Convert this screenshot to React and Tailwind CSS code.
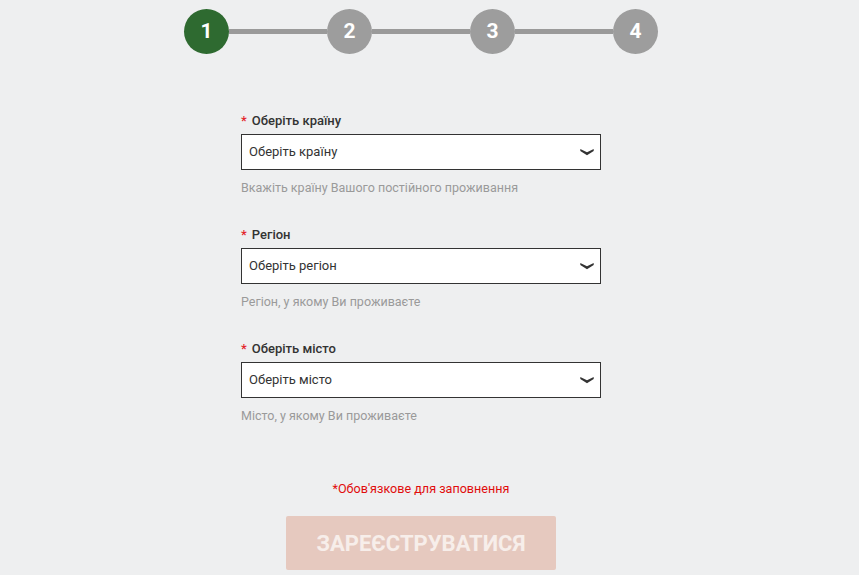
const steps = [1, 2, 3, 4];

const fields = [
  { label: "Оберіть країну", placeholder: "Оберіть країну", hint: "Вкажіть країну Вашого постійного проживання" },
  { label: "Регіон", placeholder: "Оберіть регіон", hint: "Регіон, у якому Ви проживаєте" },
  { label: "Оберіть місто", placeholder: "Оберіть місто", hint: "Місто, у якому Ви проживаєте" },
];

function Chevron() {
  return (
    <svg width="14" height="8" viewBox="0 0 14 8" className="text-[#333]">
      <path d="M0.3 1 L7 4.3 L13.7 1 L13.7 3 L7 7.2 L0.3 3 Z" fill="currentColor" />
    </svg>
  );
}

function Stepper() {
  return (
    <div className="flex items-center w-[474px]">
      {steps.map((n, i) => (
        <div key={n} className={i === 0 ? "flex items-center" : "flex items-center flex-1"}>
          {i > 0 && <div className="flex-1 h-[5px] bg-[#9a9a9a]" />}
          <div
            className={
              "w-[45px] h-[45px] rounded-full flex items-center justify-center text-white text-[21px] font-bold " +
              (i === 0 ? "bg-[#2e6a30]" : "bg-[#9d9d9d]")
            }
          >
            {n}
          </div>
        </div>
      ))}
    </div>
  );
}

function SelectField({ label, placeholder, hint }) {
  return (
    <div className="w-[360px] mb-[28px]">
      <div className="h-5 flex items-center text-[13px] font-medium text-[#333] translate-y-[1px]">
        <span className="text-[#e3242b] mr-[5px]">*</span>
        {label}
      </div>
      <div className="mt-1 h-[36px] bg-white border border-[#333] flex items-center justify-between pl-[7px] pr-[6px]">
        <span className="text-[13px] text-[#333]">{placeholder}</span>
        <Chevron />
      </div>
      <div className="mt-2 h-[18px] flex items-center text-[12.5px] text-[#9a9a9a] translate-y-[1px]">{hint}</div>
    </div>
  );
}

export default function App() {
  return (
    <div
      className="w-[859px] h-[575px] bg-[#eeeff0] overflow-hidden"
      style={{ fontFamily: "Roboto, 'Liberation Sans', sans-serif" }}
    >
      <div className="w-[842px] flex flex-col items-center pt-[9px]">
        <Stepper />
        <div className="mt-[56px] flex flex-col items-center">
          {fields.map((f) => (
            <SelectField key={f.label} {...f} />
          ))}
        </div>
        <div className="mt-[27px] h-[18px] flex items-center text-[12.6px] text-[#e10c0c] translate-y-[1px]">
          *Обов'язкове для заповнення
        </div>
        <button className="mt-[19px] w-[270px] h-[54px] rounded-[2px] bg-[#e6c9bf] text-[#f7eeea] text-[22px] font-bold uppercase">
          Зареєструватися
        </button>
      </div>
    </div>
  );
}
